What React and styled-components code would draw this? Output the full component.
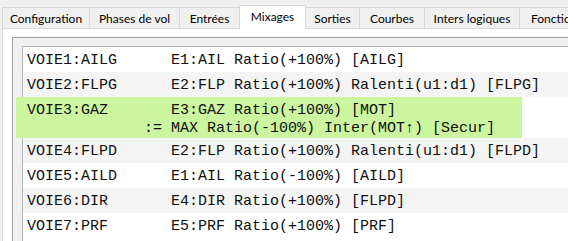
import React from "react";
import styled, { createGlobalStyle } from "styled-components";

const GlobalStyle = createGlobalStyle`
  html, body {
    margin: 0;
    padding: 0;
    background: #f0f0f0;
    overflow: hidden;
  }
  body {
    width: 568px;
    height: 241px;
    font-family: Lato, "Noto Sans", sans-serif;
  }
`;

const Window = styled.div`
  padding: 5px 0 0 2px;
  width: 720px;
`;

const TabBar = styled.div`
  display: flex;
  align-items: flex-end;
  height: 23px;
`;

const Tab = styled.div`
  box-sizing: border-box;
  flex: none;
  width: ${(p) => p.$w}px;
  height: ${(p) => (p.$active ? 24 : 21)}px;
  margin-right: -1px;
  margin-bottom: ${(p) => (p.$active ? -1 : 0)}px;
  border: 1px solid #d9d9d9;
  border-bottom: none;
  background: ${(p) => (p.$active ? "#ffffff" : "#f0f0f0")};
  position: relative;
  z-index: ${(p) => (p.$active ? 1 : 0)};
  display: flex;
  align-items: center;
  justify-content: ${(p) => (p.$left ? "flex-start" : "center")};
  padding-left: ${(p) => (p.$left ? 11 : 0)}px;
  padding-bottom: ${(p) => (p.$active ? 2 : 0)}px;
  font-size: 12px;
  color: #000;
  white-space: nowrap;
  overflow: hidden;
`;

const Pane = styled.div`
  background: #ffffff;
  border-top: 1px solid #d9d9d9;
  border-left: 1px solid #d9d9d9;
  padding: 8px 0 0 9px;
  height: 260px;
`;

const Frame = styled.div`
  border: 1px solid #a0a0a0;
  background: #f0f0f0;
  padding: 8px 0 0 9px;
  height: 260px;
`;

const List = styled.div`
  border: 1px solid #b4b4b4;
  background: #ffffff;
  height: 240px;
`;

const Row = styled.div`
  white-space: pre;
  font-family: "Liberation Mono", "Courier New", monospace;
  font-size: 15px;
  line-height: 18px;
  color: #101010;
  padding: 5px 0 ${(p) => (p.$highlight ? 0 : 2)}px ${(p) => (p.$highlight ? 11 : 4)}px;
  margin-left: ${(p) => (p.$highlight ? -7 : 0)}px;
  width: ${(p) => (p.$highlight ? "506px" : "auto")};
  box-sizing: border-box;
  background: ${(p) =>
    p.$highlight ? "#cbf69f" : p.$alt ? "#f4f4f4" : "#ffffff"};
`;

const Line = styled.div``;

const tabs = [
  { label: "Configuration", w: 88 },
  { label: "Phases de vol", w: 91 },
  { label: "Entrées", w: 61 },
  { label: "Mixages", w: 67, active: true },
  { label: "Sorties", w: 55 },
  { label: "Courbes", w: 66 },
  { label: "Inters logiques", w: 96 },
  { label: "Fonctions spéciales", w: 130, left: true },
];

const rows = [
  { lines: ["VOIE1:AILG      E1:AIL Ratio(+100%) [AILG]"] },
  { lines: ["VOIE2:FLPG      E2:FLP Ratio(+100%) Ralenti(u1:d1) [FLPG]"] },
  {
    lines: [
      "VOIE3:GAZ       E3:GAZ Ratio(+100%) [MOT]",
      "             := MAX Ratio(-100%) Inter(MOT\u2191) [Secur]",
    ],
    highlight: true,
  },
  { lines: ["VOIE4:FLPD      E2:FLP Ratio(+100%) Ralenti(u1:d1) [FLPD]"] },
  { lines: ["VOIE5:AILD      E1:AIL Ratio(-100%) [AILD]"] },
  { lines: ["VOIE6:DIR       E4:DIR Ratio(+100%) [FLPD]"] },
  { lines: ["VOIE7:PRF       E5:PRF Ratio(+100%) [PRF]"] },
];

export default function App() {
  return (
    <>
      <GlobalStyle />
      <Window>
        <TabBar>
          {tabs.map((t) => (
            <Tab key={t.label} $w={t.w} $active={t.active} $left={t.left}>
              {t.label}
            </Tab>
          ))}
        </TabBar>
        <Pane>
          <Frame>
            <List>
              {rows.map((r, i) => (
                <Row key={i} $alt={i % 2 === 1} $highlight={r.highlight}>
                  {r.lines.map((l, j) => (
                    <Line key={j}>{l}</Line>
                  ))}
                </Row>
              ))}
            </List>
          </Frame>
        </Pane>
      </Window>
    </>
  );
}
